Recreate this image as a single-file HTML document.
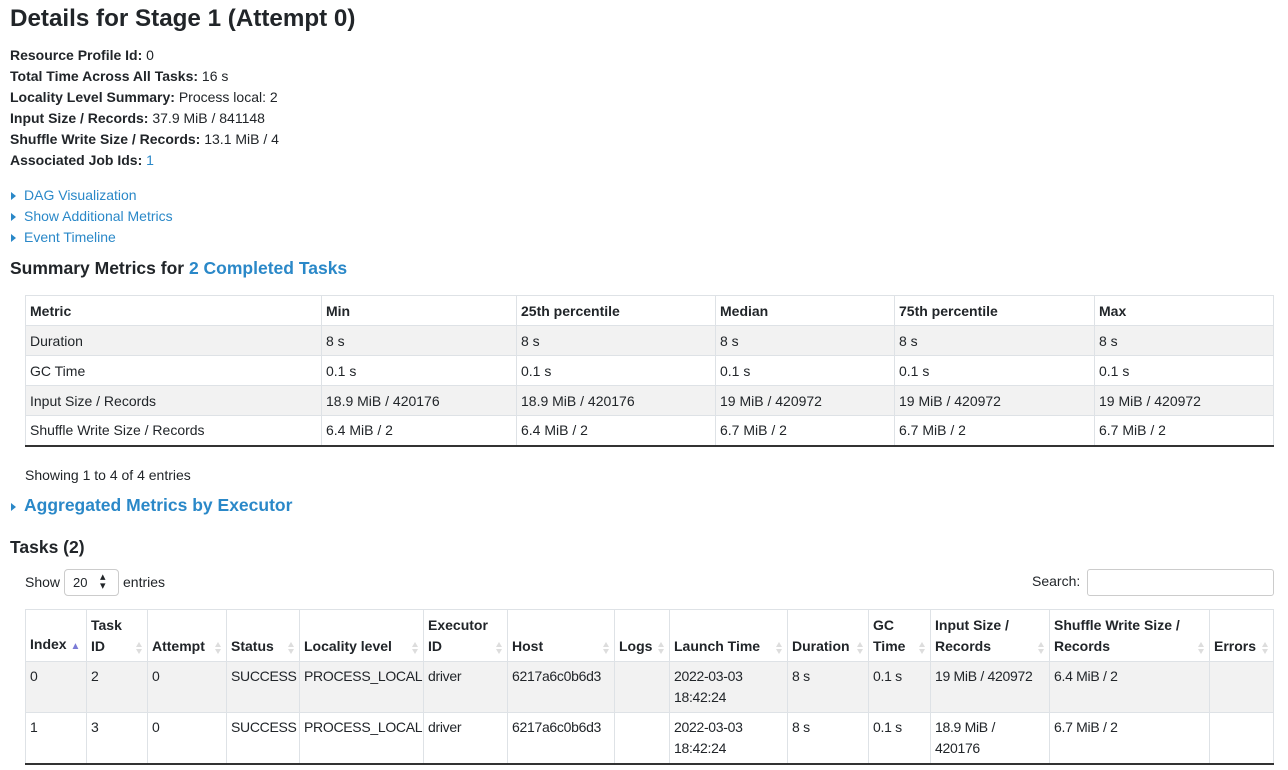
<!DOCTYPE html>
<html><head><meta charset="utf-8"><style>
*{box-sizing:border-box}
body{margin:0;width:1288px;height:770px;overflow:hidden;font-family:"Liberation Sans",sans-serif;font-size:14px;color:#212529;background:#fff;position:relative}
.a{position:absolute;white-space:nowrap}
h3{margin:0;font-size:24px;font-weight:bold}
b{font-weight:bold}
.lnk{color:#2a88c8}
.tri{display:inline-block;width:0;height:0;border-top:4px solid transparent;border-bottom:4px solid transparent;border-left:5px solid #2a88c8;margin-right:8px;vertical-align:0px}
table{border-collapse:collapse;table-layout:fixed;position:absolute}
td,th{border:1px solid #dee2e6;padding:0 4px;text-align:left;vertical-align:middle;overflow:hidden;white-space:nowrap}
th{font-weight:bold}
.s tr{height:30px}
.s tr.g td{background:#f2f2f2}
.s tbody tr:last-child td{border-bottom:2px solid #333}
.t th{height:52px;vertical-align:bottom;padding:0 12px 4px 4px;line-height:21px;white-space:normal;position:relative}
.t td{height:51px;vertical-align:top;padding-top:4px;line-height:21px;white-space:normal;letter-spacing:-0.3px}
.t tr.g td{background:#f2f2f2}
.t tbody tr:last-child td{border-bottom:2px solid #333}
.srt{position:absolute;right:4px;bottom:7px;width:7px;height:12px}
.srt:before{content:"";position:absolute;top:0;left:0;border-left:3.5px solid transparent;border-right:3.5px solid transparent;border-bottom:5px solid #ddd}
.srt:after{content:"";position:absolute;bottom:0;left:0;border-left:3.5px solid transparent;border-right:3.5px solid transparent;border-top:5px solid #ddd}
.h4{font-size:17.5px;font-weight:bold}
</style></head><body>
<div class="a" style="left:10px;top:5px"><h3 style="font-size:24.2px">Details for Stage 1 (Attempt 0)</h3></div>
<div class="a" style="left:10px;top:45px;line-height:21px">
<b>Resource Profile Id:</b> 0<br>
<b>Total Time Across All Tasks:</b> 16 s<br>
<b>Locality Level Summary:</b> Process local: 2<br>
<b>Input Size / Records:</b> 37.9 MiB / 841148<br>
<b>Shuffle Write Size / Records:</b> 13.1 MiB / 4<br>
<b>Associated Job Ids:</b> <span class="lnk">1</span>
</div>
<div class="a lnk" style="left:11px;top:185px;line-height:21px">
<span class="tri"></span>DAG Visualization<br>
<span class="tri"></span>Show Additional Metrics<br>
<span class="tri"></span>Event Timeline
</div>
<div class="a h4" style="left:10px;top:258px">Summary Metrics for <span class="lnk">2 Completed Tasks</span></div>
<table class="s" style="left:25px;top:295px;width:1248px">
<colgroup><col style="width:296px"><col style="width:195px"><col style="width:199px"><col style="width:179px"><col style="width:200px"><col style="width:179px"></colgroup>
<thead><tr><th>Metric</th><th>Min</th><th>25th percentile</th><th>Median</th><th>75th percentile</th><th>Max</th></tr></thead>
<tbody>
<tr class="g"><td>Duration</td><td>8 s</td><td>8 s</td><td>8 s</td><td>8 s</td><td>8 s</td></tr>
<tr><td>GC Time</td><td>0.1 s</td><td>0.1 s</td><td>0.1 s</td><td>0.1 s</td><td>0.1 s</td></tr>
<tr class="g"><td>Input Size / Records</td><td>18.9 MiB / 420176</td><td>18.9 MiB / 420176</td><td>19 MiB / 420972</td><td>19 MiB / 420972</td><td>19 MiB / 420972</td></tr>
<tr><td>Shuffle Write Size / Records</td><td>6.4 MiB / 2</td><td>6.4 MiB / 2</td><td>6.7 MiB / 2</td><td>6.7 MiB / 2</td><td>6.7 MiB / 2</td></tr>
</tbody></table>
<div class="a" style="left:25px;top:467px">Showing 1 to 4 of 4 entries</div>
<div class="a lnk h4" style="left:11px;top:495px"><span class="tri"></span>Aggregated Metrics by Executor</div>
<div class="a h4" style="left:10px;top:537px">Tasks (2)</div>
<div class="a" style="left:25px;top:574px">Show</div>
<div class="a" style="left:64px;top:569px;width:55px;height:27px;border:1px solid #ccc;border-radius:4px;font-size:13px;padding:5px 0 0 8px">20<span style="position:absolute;left:35px;top:3px;font-size:11px;line-height:9px">▴<br>▾</span></div>
<div class="a" style="left:123px;top:574px">entries</div>
<div class="a" style="left:1032px;top:573px">Search:</div>
<div class="a" style="left:1087px;top:569px;width:187px;height:27px;border:1px solid #ccc;border-radius:3px"></div>
<table class="t" style="left:25px;top:609px;width:1248px">
<colgroup><col style="width:61px"><col style="width:61px"><col style="width:79px"><col style="width:73px"><col style="width:124px"><col style="width:84px"><col style="width:107px"><col style="width:55px"><col style="width:118px"><col style="width:81px"><col style="width:62px"><col style="width:119px"><col style="width:160px"><col style="width:64px"></colgroup>
<thead><tr>
<th style="padding-right:2px">Index <span style="color:#7b7bd6;font-size:10px">▲</span></th><th>Task ID<span class="srt"></span></th><th>Attempt<span class="srt"></span></th><th>Status<span class="srt"></span></th><th>Locality level<span class="srt"></span></th><th>Executor ID<span class="srt"></span></th><th>Host<span class="srt"></span></th><th>Logs<span class="srt"></span></th><th>Launch Time<span class="srt"></span></th><th>Duration<span class="srt"></span></th><th>GC Time<span class="srt"></span></th><th>Input Size / Records<span class="srt"></span></th><th>Shuffle Write Size / Records<span class="srt"></span></th><th>Errors<span class="srt"></span></th>
</tr></thead>
<tbody>
<tr class="g"><td>0</td><td>2</td><td>0</td><td>SUCCESS</td><td>PROCESS_LOCAL</td><td>driver</td><td>6217a6c0b6d3</td><td></td><td>2022-03-03 18:42:24</td><td>8 s</td><td>0.1 s</td><td>19 MiB / 420972</td><td>6.4 MiB / 2</td><td></td></tr>
<tr><td>1</td><td>3</td><td>0</td><td>SUCCESS</td><td>PROCESS_LOCAL</td><td>driver</td><td>6217a6c0b6d3</td><td></td><td>2022-03-03 18:42:24</td><td>8 s</td><td>0.1 s</td><td>18.9 MiB /<br>420176</td><td>6.7 MiB / 2</td><td></td></tr>
</tbody></table>
</body></html>
